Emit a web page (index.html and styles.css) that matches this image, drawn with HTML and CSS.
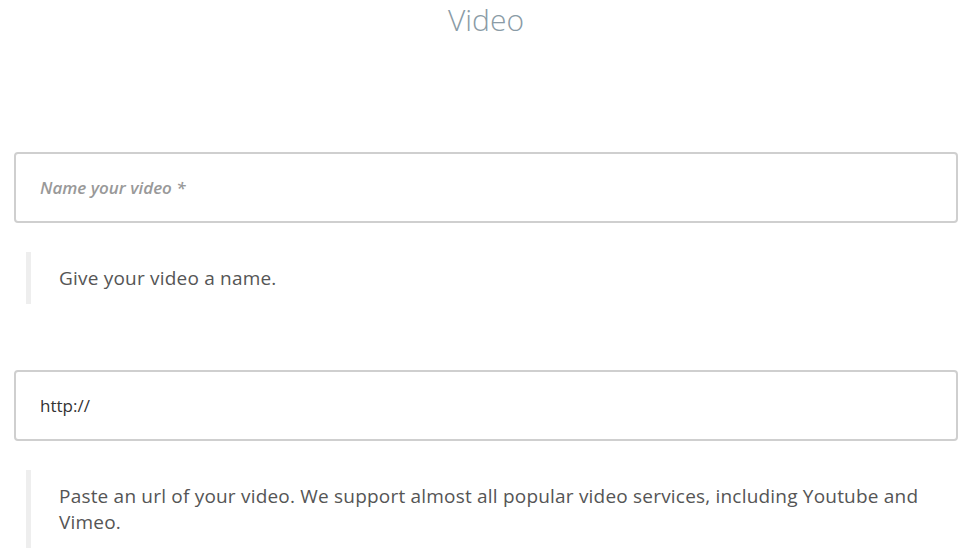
FILE: index.html
```html
<!DOCTYPE html>
<html lang="en">
<head>
  <meta charset="UTF-8">
  <title>Video</title>
  <link rel="stylesheet" href="styles.css">
</head>
<body>
  <div class="page">
    <h1 class="title">Video</h1>
    <form class="video-form">
      <div class="field">
        <input type="text" class="field-input" placeholder="Name your video *">
        <div class="field-help">Give your video a name.</div>
      </div>
      <div class="field">
        <input type="text" class="field-input" value="http://">
        <div class="field-help">Paste an url of your video. We support almost all popular video services, including Youtube and Vimeo.</div>
      </div>
    </form>
  </div>
</body>
</html>
```

FILE: styles.css
```css
body {
  margin: 0;
  font-family: 'Open Sans', 'DejaVu Sans', sans-serif;
  background: #fff;
}
.page {
  padding: 0 14px;
}
.title {
  margin: 0 0 112px;
  font-size: 30px;
  line-height: 40px;
  font-weight: 300;
  color: #8a9ba6;
  text-align: center;
}
.field {
  margin-bottom: 66px;
}
.field-input {
  display: block;
  box-sizing: border-box;
  width: 100%;
  height: 71px;
  padding: 0 24px;
  border: 2px solid #cfcfcf;
  border-radius: 4px;
  font-family: inherit;
  font-size: 17px;
  color: #333;
  outline: none;
}
.field-input::placeholder {
  color: #999;
  font-style: italic;
  font-weight: 600;
}
.field-help {
  margin: 29px 0 0 12px;
  padding: 13px 28px;
  border-left: 5px solid #eee;
  font-size: 19px;
  letter-spacing: 0.2px;
  line-height: 26px;
  color: #555;
}
```
